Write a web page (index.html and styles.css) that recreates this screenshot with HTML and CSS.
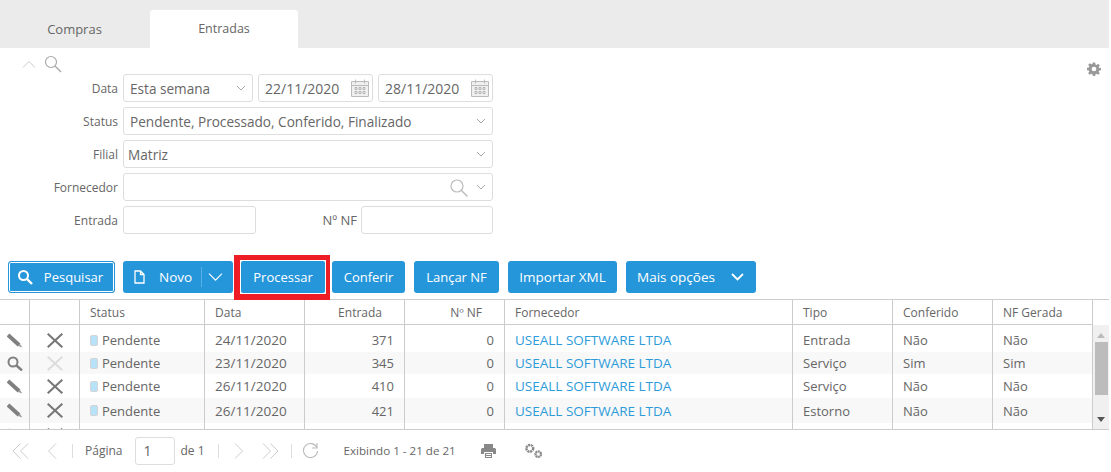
FILE: index.html
```html
<!DOCTYPE html>
<html>
<head>
  <title>Entradas</title>
  <link rel="stylesheet" href="styles.css">
</head>
<body>
<div class="page">

  <div class="tabs">
    <div class="tab">Compras</div>
    <div class="tab active">Entradas</div>
  </div>

  <div class="filters">
    <svg class="gear" width="14" height="14" viewBox="0 0 24 24"><path fill="#999" d="M10 1h4l.6 3.200 1.900.8 2.700-1.900 2.800 2.800-1.900 2.700.8 1.900L24 10v4l-3.200.6-.8 1.900 1.900 2.700-2.800 2.800-2.700-1.900-1.900.8L14 24h-4l-.6-3.200-1.900-.8-2.700 1.900L2 19.100l1.900-2.700-.8-1.900L0 14v-4l3.100-.6.8-1.900L2 4.900l2.800-2.800 2.700 1.900 1.900-.8zM12 8a4 4 0 1 0 0 8 4 4 0 0 0 0-8z"/></svg>

    <div class="filter-head">
      <svg width="14" height="8" viewBox="0 0 14 8"><path d="M1 7.500 7 1.500l6 6" fill="none" stroke="#c8c8c8"/></svg>
      <svg width="18" height="18" viewBox="0 0 18 18"><circle cx="7" cy="7" r="5.500" fill="none" stroke="#aaa" stroke-width="1.200"/><path d="M11 11l6 6" stroke="#aaa" stroke-width="1.400"/></svg>
    </div>

    <div class="row">
      <label>Data</label>
      <div class="field w-period">Esta semana
        <svg class="chev" width="10" height="6" viewBox="0 0 10 6"><path d="M1 1l4 4 4-4" fill="none" stroke="#aaa"/></svg>
      </div>
      <div class="field w-date">22/11/2020
        <svg class="cal" width="18" height="18" viewBox="0 0 18 18"><path fill="#efefef" d="M1 3h16v14H1z"/><path d="M.5 2.500h17v15H.500zM.5 6.500h17M4.500 .5v4M13.500 .5v4" fill="none" stroke="#bbb"/><path d="M4 8.500h2v2H4zM8 8.500h2v2H8zM12 8.500h2v2h-2zM4 12.500h2v2H4zM8 12.500h2v2H8zM12 12.500h2v2h-2z" fill="none" stroke="#aaa" stroke-width=".8"/></svg>
      </div>
      <div class="field w-date">28/11/2020
        <svg class="cal" width="18" height="18" viewBox="0 0 18 18"><path fill="#efefef" d="M1 3h16v14H1z"/><path d="M.5 2.500h17v15H.500zM.5 6.500h17M4.500 .5v4M13.500 .5v4" fill="none" stroke="#bbb"/><path d="M4 8.500h2v2H4zM8 8.500h2v2H8zM12 8.500h2v2h-2zM4 12.500h2v2H4zM8 12.500h2v2H8zM12 12.500h2v2h-2z" fill="none" stroke="#aaa" stroke-width=".8"/></svg>
      </div>
    </div>

    <div class="row">
      <label>Status</label>
      <div class="field w-full">Pendente, Processado, Conferido, Finalizado
        <svg class="chev" width="10" height="6" viewBox="0 0 10 6"><path d="M1 1l4 4 4-4" fill="none" stroke="#aaa"/></svg>
      </div>
    </div>

    <div class="row">
      <label>Filial</label>
      <div class="field w-full tight">Matriz
        <svg class="chev" width="10" height="6" viewBox="0 0 10 6"><path d="M1 1l4 4 4-4" fill="none" stroke="#aaa"/></svg>
      </div>
    </div>

    <div class="row">
      <label>Fornecedor</label>
      <div class="field w-full">
        <svg class="lookup" width="18" height="18" viewBox="0 0 18 18"><circle cx="7" cy="7" r="6" fill="none" stroke="#bbb" stroke-width="1.200"/><path d="M11.500 11.500l6 6" stroke="#bbb" stroke-width="1.400"/></svg>
        <svg class="chev" width="10" height="6" viewBox="0 0 10 6"><path d="M1 1l4 4 4-4" fill="none" stroke="#aaa"/></svg>
      </div>
    </div>

    <div class="row">
      <label>Entrada</label>
      <div class="field w-entrada"></div>
      <label class="label-nf">Nº NF</label>
      <div class="field w-nf"></div>
    </div>
  </div>

  <div class="toolbar">
    <button class="btn focused btn-pesquisar">
      <svg width="16" height="16" viewBox="0 0 16 16"><circle cx="6.500" cy="6.500" r="4.500" fill="none" stroke="#fff" stroke-width="2"/><path d="M10 10l5 5" stroke="#fff" stroke-width="2.400"/></svg>
      Pesquisar
    </button>
    <button class="btn btn-novo">
      <svg width="11" height="14" viewBox="0 0 11 14"><path d="M1 1h5.500l3.500 3.500V13H1zM6.500 1v3.500H10" fill="none" stroke="#fff" stroke-width="1.300"/></svg>
      <span class="novo-text">Novo</span>
      <span class="split"></span>
      <svg width="15" height="8" viewBox="0 0 15 8"><path d="M1 .7l6.500 6.500L14 .7" fill="none" stroke="#fff" stroke-width="1.100"/></svg>
    </button>
    <div class="marker">
      <button class="btn btn-processar">Processar</button>
    </div>
    <button class="btn btn-conferir">Conferir</button>
    <button class="btn btn-lancar">Lançar NF</button>
    <button class="btn btn-importar">Importar XML</button>
    <button class="btn btn-mais">
      Mais opções
      <svg width="13" height="8" viewBox="0 0 13 8"><path d="M1 1l5.500 5.500L12 1" fill="none" stroke="#fff" stroke-width="1.800"/></svg>
    </button>
  </div>

  <div class="grid">
    <div class="grid-main">
      <div class="grid-head">
        <div class="th"></div>
        <div class="th"></div>
        <div class="th">Status</div>
        <div class="th">Data</div>
        <div class="th num">Entrada</div>
        <div class="th num">Nº NF</div>
        <div class="th">Fornecedor</div>
        <div class="th">Tipo</div>
        <div class="th">Conferido</div>
        <div class="th">NF Gerada</div>
      </div>
      <div class="grid-scroll" id="rows"></div>
    </div>
    <div class="scrollbar">
      <svg width="8" height="5" viewBox="0 0 8 5"><path d="M4 0l4 5H0z" fill="#bbb"/></svg>
      <div class="thumb"></div>
      <svg class="down" width="8" height="5" viewBox="0 0 8 5"><path d="M4 5l4-5H0z" fill="#555"/></svg>
    </div>
  </div>

  <div class="pager">
    <svg class="p-first" width="17" height="16" viewBox="0 0 17 16"><path d="M8.500 .5 1 8l7.500 7.500M16 .5 8.500 8l7.500 7.500" fill="none" stroke="#ccc"/></svg>
    <svg class="p-prev" width="10" height="16" viewBox="0 0 10 16"><path d="M9 .5 1.500 8 9 15.500" fill="none" stroke="#ccc"/></svg>
    <span class="sep s1"></span>
    <span class="p-label">Página</span>
    <div class="p-input">1</div>
    <span class="p-of">de 1</span>
    <span class="sep s2"></span>
    <svg class="p-next" width="10" height="16" viewBox="0 0 10 16"><path d="M1 .5 8.500 8 1 15.500" fill="none" stroke="#ccc"/></svg>
    <svg class="p-last" width="17" height="16" viewBox="0 0 17 16"><path d="M1 .5 8.500 8 1 15.500M8.500 .5 16 8l-7.500 7.500" fill="none" stroke="#ccc"/></svg>
    <span class="sep s3"></span>
    <svg class="p-refresh" width="17" height="17" viewBox="0 0 17 17"><path d="M14.800 5.500A7 7 0 1 0 15.500 9" fill="none" stroke="#bbb" stroke-width="1.100"/><path d="M15 1v5h-5" fill="none" stroke="#bbb" stroke-width="1.100"/></svg>
    <span class="p-info">Exibindo 1 - 21 de 21</span>
    <svg class="p-print" width="15" height="14" viewBox="0 0 15 14"><path fill="#888" d="M3 0h9v4H3zM1.500 4h12A1.500 1.500 0 0 1 15 5.500V10h-3V8H3v2H0V5.500A1.500 1.500 0 0 1 1.500 4zM4 9h7v5H4z"/><path fill="#fff" d="M5 10h5v1H5zM5 12h5v1H5z"/></svg>
    <svg class="p-gears" width="19" height="16" viewBox="0 0 18 15"><circle cx="5.500" cy="5" r="3.200" fill="none" stroke="#888" stroke-width="2.400" stroke-dasharray="2 .6"/><circle cx="13.500" cy="10.500" r="2.600" fill="none" stroke="#888" stroke-width="2.200" stroke-dasharray="1.800 .5"/></svg>
  </div>

</div>

<script>
  // the fifth row is scrolled almost out of view, only the top of its icons shows
  let entries = [
    { icon: "edit", del: true, status: "Pendente", date: "24/11/2020", id: 371, nf: 0, forn: "USEALL SOFTWARE LTDA", tipo: "Entrada", conf: "Não", gerada: "Não" },
    { icon: "view", del: false, status: "Pendente", date: "23/11/2020", id: 345, nf: 0, forn: "USEALL SOFTWARE LTDA", tipo: "Serviço", conf: "Sim", gerada: "Sim" },
    { icon: "edit", del: true, status: "Pendente", date: "26/11/2020", id: 410, nf: 0, forn: "USEALL SOFTWARE LTDA", tipo: "Serviço", conf: "Não", gerada: "Não" },
    { icon: "edit", del: true, status: "Pendente", date: "26/11/2020", id: 421, nf: 0, forn: "USEALL SOFTWARE LTDA", tipo: "Estorno", conf: "Não", gerada: "Não" },
    { icon: "edit", del: true }
  ];

  let editIcon = `<svg width="16" height="15" viewBox="0 0 16 15"><path d="M1 2l11 10" stroke="#808080" stroke-width="4"/><path d="M12.500 10.500l3 4-4.500-1.500z" fill="#999"/></svg>`;
  let viewIcon = `<svg width="16" height="15" viewBox="0 0 16 15"><circle cx="6" cy="6" r="4.500" fill="none" stroke="#808080" stroke-width="2"/><path d="M9.500 9.500l5.500 5" stroke="#808080" stroke-width="2.400"/></svg>`;

  function delIcon(on) {
    let color = on ? "#777" : "#ddd";
    return `<svg width="16" height="15" viewBox="0 0 16 15"><path d="M.7 .7l14.600 13.600M15.300 .7 .7 14.300" stroke="${color}" stroke-width="2"/></svg>`;
  }

  let list = document.getElementById("rows");
  entries.forEach(e => {
    let cells = e.status ? `
        <div class="td"><span class="chip"></span>${e.status}</div>
        <div class="td wide">${e.date}</div>
        <div class="td num">${e.id}</div>
        <div class="td num">${e.nf}</div>
        <div class="td wide"><a class="link">${e.forn}</a></div>
        <div class="td">${e.tipo}</div>
        <div class="td">${e.conf}</div>
        <div class="td">${e.gerada}</div>
    ` : `<div class="td"></div>`.repeat(8);
    list.innerHTML += `
      <div class="tr">
        <div class="td ic">${e.icon === "edit" ? editIcon : viewIcon}</div>
        <div class="td ic">${delIcon(e.del)}</div>
        ${cells}
      </div>
    `;
  });
</script>
</body>
</html>
```

FILE: styles.css
```css
* {
  box-sizing: border-box;
}
html, body {
  margin: 0;
  background: #fff;
}
body {
  font-family: "Open Sans", sans-serif;
  font-size: 13px;
  color: #666;
  overflow: hidden;
}
.page {
  width: 1109px;
  height: 472px;
  overflow: hidden;
}

/* tabs */
.tabs {
  height: 48px;
  background: #ebebeb;
  display: flex;
  align-items: flex-end;
}
.tab {
  height: 38px;
  line-height: 38px;
  width: 150px;
  padding-right: 1px;
  text-align: center;
  font-size: 13px;
  color: #666;
}
.tab.active {
  width: 148px;
  padding-right: 0;
  font-size: 12.500px;
  background: #fff;
  border-radius: 3px 3px 0 0;
}

/* filters */
.filters {
  position: relative;
  height: 213px;
}
.gear {
  position: absolute;
  right: 8px;
  top: 14px;
}
.filter-head {
  height: 26px;
  padding: 7px 0 0 22px;
  display: flex;
  gap: 8px;
}
.filter-head svg:first-child {
  margin-top: 5px;
}
.row {
  display: flex;
  height: 28px;
  margin-bottom: 5px;
  align-items: center;
}
.row label {
  width: 118px;
  text-align: right;
  font-size: 12px;
  margin-right: 5px;
}
.row .label-nf {
  width: 42px;
  margin-left: 59px;
  margin-right: 4px;
  font-size: 13px;
}
.field {
  position: relative;
  height: 28px;
  line-height: 27px;
  border: 1px solid #ddd;
  border-radius: 3px;
  padding-left: 6px;
  font-size: 13.600px;
  margin-right: 5px;
  background: #fff;
}
.field.tight {
  padding-left: 4px;
}
.w-period {
  width: 130px;
}
.w-date {
  width: 115px;
  font-size: 14px;
}
.w-full {
  width: 370px;
}
.w-entrada {
  width: 133px;
  margin-right: 0;
}
.w-nf {
  width: 132px;
}
.chev {
  position: absolute;
  right: 6px;
  top: 10px;
}
.cal {
  position: absolute;
  right: 3px;
  top: 4px;
}
.lookup {
  position: absolute;
  right: 24px;
  top: 5px;
}

/* toolbar */
.toolbar {
  display: flex;
  height: 38px;
  align-items: flex-start;
}
.btn {
  height: 32px;
  border: 0;
  border-radius: 3px;
  background: #2596da;
  color: #fff;
  font-family: inherit;
  font-size: 13px;
  display: flex;
  align-items: center;
  justify-content: center;
  padding: 0;
}
.btn.focused {
  border: 1px solid #2596da;
  box-shadow: inset 0 0 0 1px #fff;
}
.marker {
  width: 96px;
  height: 45px;
  margin: -6px 0 0 1px;
  border-style: solid;
  border-color: #ee1c25;
  border-width: 5px 4px 6px 6px;
  background: #fff;
  padding: 1px;
}
.btn-pesquisar {
  width: 107px;
  margin-left: 8px;
  gap: 11px;
  padding-right: 3px;
}
.btn-novo {
  width: 110px;
  margin-left: 8px;
  padding-left: 11px;
  justify-content: flex-start;
}
.novo-text {
  margin-left: 14px;
  font-size: 13.500px;
}
.split {
  width: 1px;
  height: 20px;
  background: #5bb0e3;
  margin: 0 6px 0 9px;
}
.btn-processar {
  width: 84px;
  border-radius: 2px;
}
.btn-conferir {
  width: 73px;
  margin-left: 2px;
}
.btn-lancar {
  width: 85px;
  margin-left: 9px;
}
.btn-importar {
  width: 109px;
  margin-left: 9px;
  font-size: 13.500px;
}
.btn-mais {
  width: 130px;
  margin-left: 9px;
  gap: 16px;
  padding-right: 1px;
  font-size: 13.500px;
}

/* table */
.grid {
  display: flex;
  height: 131px;
  border-top: 1px solid #ccc;
  border-bottom: 1px solid #ccc;
}
.grid-main {
  width: 1093px;
}
.grid-head, .tr {
  display: grid;
  grid-template-columns: 30px 50px 125px repeat(3, 100px) 288px repeat(3, 100px);
}
.grid-head {
  height: 25px;
  border-bottom: 1px solid #ccc;
}
.th, .td {
  padding: 0 10px;
  border-right: 1px solid #ccc;
  white-space: nowrap;
  overflow: hidden;
  display: flex;
  align-items: center;
}
.th {
  font-size: 12px;
}
.td {
  font-size: 13px;
}
.td.wide {
  font-size: 13.500px;
}
.th.num {
  justify-content: flex-end;
  padding-right: 22px;
}
.td.num {
  justify-content: flex-end;
}
.grid-scroll {
  height: 104px;
  overflow: hidden;
}
.tr:nth-child(1) {
  height: 27px;
}
.tr:nth-child(1) .td {
  padding-top: 3px;
}
.tr:nth-child(2) {
  height: 22px;
  background: #f8f8f8;
}
.tr:nth-child(3) {
  height: 24px;
}
.tr:nth-child(4) {
  height: 25px;
  background: #f8f8f8;
}
.tr:nth-child(5) {
  height: 25px;
}
.td.ic {
  padding: 0;
  justify-content: center;
}
.chip {
  width: 8px;
  height: 11px;
  border-radius: 2px;
  background: #b8e2f8;
  border: 1px solid #d4d4d4;
  margin-right: 4px;
}
.link {
  color: #2e9bd9;
}
.scrollbar {
  width: 16px;
  background: #f0f0f0;
  display: flex;
  flex-direction: column;
  align-items: center;
  margin-top: 25px;
  padding-top: 8px;
}
.thumb {
  width: 13px;
  height: 53px;
  background: #bcbcbc;
  margin-top: 4px;
}
.scrollbar .down {
  margin-top: 22px;
}

/* pager */
.pager {
  display: flex;
  align-items: center;
  height: 41px;
  font-size: 12px;
}
.p-first {
  margin-left: 12px;
}
.p-prev {
  margin-left: 18px;
}
.sep {
  width: 1px;
  height: 14px;
  background: #ddd;
}
.s1 {
  margin-left: 15px;
}
.p-label {
  margin-left: 12px;
}
.p-input {
  width: 40px;
  height: 28px;
  line-height: 26px;
  border: 1px solid #ddd;
  border-radius: 3px;
  margin-left: 13px;
  padding-left: 7px;
  font-size: 14px;
}
.p-of {
  margin-left: 5px;
}
.s2 {
  margin-left: 13px;
}
.p-next {
  margin-left: 15px;
}
.p-last {
  margin-left: 18px;
}
.s3 {
  margin-left: 12px;
}
.p-refresh {
  margin-left: 10px;
}
.p-info {
  margin-left: 25px;
  font-size: 11.600px;
}
.p-print {
  margin-left: 25px;
}
.p-gears {
  margin-left: 28px;
}
```
